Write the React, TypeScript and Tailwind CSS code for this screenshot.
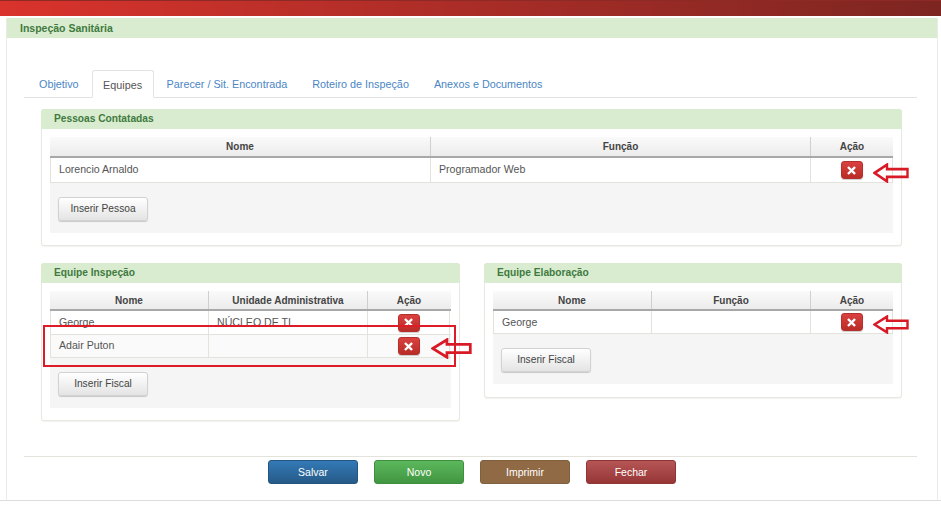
import React from "react";

function DelBtn() {
  return (
    <button className="w-[22px] h-[18px] rounded-[3px] bg-gradient-to-b from-[#d9413f] to-[#b92c28] border border-[#b5302d] flex items-center justify-center shadow-[0_1px_1px_rgba(0,0,0,0.2)]">
      <svg width="9" height="9" viewBox="0 0 10 10">
        <path d="M2 2 L8 8 M8 2 L2 8" stroke="#fff" strokeWidth="2.6" strokeLinecap="square" />
      </svg>
    </button>
  );
}

function GreyBtn({ label }: { label: string }) {
  return (
    <button className="w-[90px] h-[24px] rounded-[3px] border border-[#d2d2d2] bg-gradient-to-b from-white to-[#e4e4e4] text-[10.2px] text-[#444] shadow-[0_1px_1px_rgba(0,0,0,0.18)]">
      {label}
    </button>
  );
}

function ActionBtn({ label, cls }: { label: string; cls: string }) {
  return (
    <button className={"w-[90px] h-[24px] pt-[1px] rounded-[3px] text-[10.5px] text-white border " + cls}>{label}</button>
  );
}

function Panel({ title, children, cls }: { title: string; children: React.ReactNode; cls: string }) {
  return (
    <section className={"rounded-[3px] border border-[#e8e8e0] bg-white shadow-[0_1px_1px_rgba(0,0,0,0.05)] " + cls}>
      <h3 className="h-[20px] -mx-px -mt-px rounded-t-[3px] bg-[#d9ecd0] pl-[13px] text-[10.2px] leading-[20px] font-bold text-[#3f7a3f]">
        {title}
      </h3>
      <div className="px-[8px] pt-[8px]">{children}</div>
    </section>
  );
}

function DataTable({
  cols,
  heads,
  rows,
  headH,
}: {
  cols: string;
  heads: string[];
  rows: { cells: string[]; h: string; bg?: string; text?: string }[];
  headH: string;
}) {
  return (
    <div>
      <div className={"grid border-b-2 border-[#a8a8a8] bg-gradient-to-b from-[#fafafa] to-[#ececec] " + headH + " " + cols}>
        {heads.map((h, i) => (
          <div key={h} className={"flex items-center justify-center text-[10px] font-bold text-[#444] " + (i < 2 ? "border-r border-[#cfcfcf]" : "")}>
            {h}
          </div>
        ))}
      </div>
      {rows.map((r, ri) => (
        <div key={ri} className={"grid border-b border-[#e3e3dc] " + cols + " " + r.h + " " + (r.bg ?? "bg-white")}>
          {r.cells.map((c, i) => (
            <div key={i} className={"flex items-center pl-[8px] text-[10.6px] text-[#555] " + (r.text ?? "") + " " + (i === 0 ? "border-l border-[#e3e3dc] " : "") + "border-r border-[#e3e3dc]"}>
              {c}
            </div>
          ))}
          <div className="flex items-center justify-center border-r border-[#e3e3dc]">
            <DelBtn />
          </div>
        </div>
      ))}
    </div>
  );
}

function Arrow({ cls }: { cls: string }) {
  return (
    <svg className={"absolute " + cls} viewBox="0 0 36 18" preserveAspectRatio="none" fill="none">
      <path d="M1.5 9 L14 1.5 V5.5 H34.5 V12.5 H14 V16.5 Z" stroke="#d81a26" strokeWidth="2.4" />
    </svg>
  );
}

export default function App() {
  const tabs = ["Objetivo", "Equipes", "Parecer / Sit. Encontrada", "Roteiro de Inspeção", "Anexos e Documentos"];
  return (
    <div className="relative w-[941px] h-[505px] overflow-hidden bg-white font-['Liberation_Sans',Arial,sans-serif]">
      <div className="h-[16px] bg-gradient-to-r from-[#d9332c] to-[#7d2521] border-t border-[#8d2a26]" />
      <div className="ml-[6px] mr-[3px] mt-[2px] h-[482px] border-l border-r border-[#ecece6]">
        <div className="h-[20px] bg-[#d9ecd0] pl-[13px] text-[10.5px] leading-[20px] font-bold text-[#3f7a3f]">Inspeção Sanitária</div>
        <div className="pl-[17px] pr-[20px] pt-[32px]">
          <nav className="flex h-[28px] border-b border-[#e3e3e3] pl-[3px]">
            {tabs.map((t, i) => (
              <div
                key={t}
                className={
                  i === 1
                    ? "w-[62px] mr-[1px] h-[28px] leading-[28px] text-center text-[10.8px] border border-[#e3e3e3] border-b-white bg-white rounded-t-[3px] text-[#555]"
                    : "px-[12px] mr-[1px] h-[28px] leading-[28px] text-[10.8px] text-[#4a86c5]"
                }
              >
                {t}
              </div>
            ))}
          </nav>
          <div className="ml-[17px] mr-[15px] mt-[11px]">
            <Panel title="Pessoas Contatadas" cls="h-[137px]">
              <DataTable
                headH="h-[21px]"
                cols="grid-cols-[381px_380px_82px]"
                heads={["Nome", "Função", "Ação"]}
                rows={[{ cells: ["Lorencio Arnaldo", "Programador Web"], h: "h-[25px]" }]}
              />
              <div className="h-[50px] bg-[#f5f5f5] pl-[8px] pt-[12px]">
                <GreyBtn label="Inserir Pessoa" />
              </div>
            </Panel>
            <div className="mt-[17px] flex justify-between items-start">
              <Panel title="Equipe Inspeção" cls="w-[419px] h-[158px]">
                <DataTable
                  headH="h-[20px]"
                  cols="grid-cols-[159px_159px_82px]"
                  heads={["Nome", "Unidade Administrativa", "Ação"]}
                  rows={[
                    { cells: ["George", "NÚCLEO DE TI"], h: "h-[24px]" },
                    { cells: ["Adair Puton", ""], h: "h-[23px]", bg: "bg-[#fafafa]" },
                  ]}
                />
                <div className="h-[50px] bg-[#f5f5f5] pl-[8px] pt-[12px]">
                  <GreyBtn label="Inserir Fiscal" />
                </div>
              </Panel>
              <Panel title="Equipe Elaboração" cls="w-[418px] h-[135px]">
                <DataTable
                  headH="h-[20px]"
                  cols="grid-cols-[159px_159px_82px]"
                  heads={["Nome", "Função", "Ação"]}
                  rows={[{ cells: ["George", ""], h: "h-[23px]", text: "pt-[1px]" }]}
                />
                <div className="h-[50px] bg-[#f5f5f5] pl-[8px] pt-[12px]">
                  <GreyBtn label="Inserir Fiscal" />
                </div>
              </Panel>
            </div>
          </div>
          <div className="mt-[35px] border-t border-[#e3e3dc] pt-[3px] flex justify-center gap-[16px] pl-[3px]">
            <ActionBtn label="Salvar" cls="bg-gradient-to-b from-[#337ab7] to-[#265a88] border-[#245580]" />
            <ActionBtn label="Novo" cls="bg-gradient-to-b from-[#5cb85c] to-[#419641] border-[#3e8f3e]" />
            <ActionBtn label="Imprimir" cls="bg-[#8f6a45] border-[#80603f]" />
            <ActionBtn label="Fechar" cls="bg-gradient-to-b from-[#b55555] to-[#973636] border-[#8f3535]" />
          </div>
        </div>
      </div>
      <div className="h-[1px] bg-[#dcdcdc]" />

      <div className="absolute left-[43px] top-[325px] w-[413px] h-[42px] border-[2px] border-[#dd1c28]" />
      <Arrow cls="left-[873px] top-[163px] w-[36px] h-[20px]" />
      <Arrow cls="left-[873px] top-[315px] w-[36px] h-[19px]" />
      <Arrow cls="left-[431px] top-[338px] w-[41px] h-[21px]" />
    </div>
  );
}
